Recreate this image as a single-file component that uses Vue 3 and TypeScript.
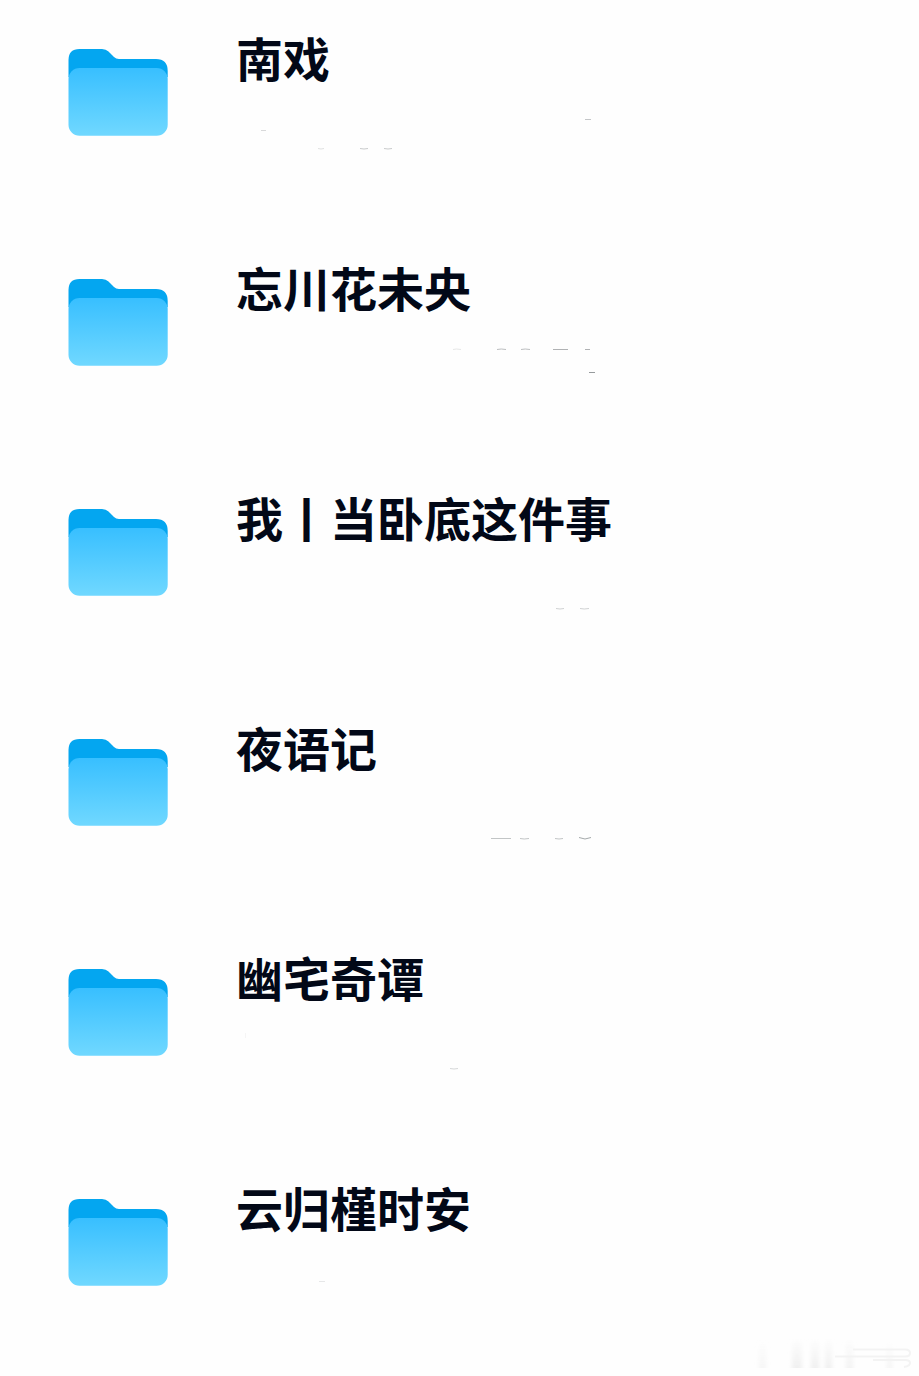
<script setup lang="ts">
interface Mark {
  d: string
  tone: string
}

interface Folder {
  name: string
  marks: Mark[]
}

const folders: Folder[] = [
  {
    name: '南戏',
    marks: [
      { d: 'M349 9.5h6', tone: '#c4c6c8' },
      { d: 'M25 20.5h5', tone: '#d8d9da' },
      { d: 'M82 38.5q3 1 6 0', tone: '#e0e1e1' },
      { d: 'M124 38.5q4 1 8 0M148 38.5q4 1 8 0', tone: '#c9cbcc' },
    ],
  },
  {
    name: '忘川花未央',
    marks: [
      { d: 'M217 9.5q3-1 8 0', tone: '#e6e7e7' },
      { d: 'M261 9.5q4-1 9 0M285 9.5q4-1 9 0', tone: '#bcbec0' },
      { d: 'M317 9.5h15M349 9.5h5', tone: '#b0b2b4' },
      { d: 'M353 32.5h6', tone: '#969a9c' },
    ],
  },
  {
    name: '我丨当卧底这件事',
    marks: [{ d: 'M320 38.5q4 1 8 0M344 38.5q4 1 9 0', tone: '#d0d2d3' }],
  },
  {
    name: '夜语记',
    marks: [
      { d: 'M255 38.5h20M284 38.5q4 1 9 0M319 38.5q4 1 8 0', tone: '#c2c5c6' },
      { d: 'M343 37.5q6 3 12 0', tone: '#a4a9aa' },
    ],
  },
  {
    name: '幽宅奇谭',
    marks: [
      { d: 'M9.5 3v5', tone: '#f5f5f5' },
      { d: 'M214 38.5q4 1 8 0', tone: '#d6d8d9' },
    ],
  },
  {
    name: '云归槿时安',
    marks: [{ d: 'M83 21.5h6', tone: '#e6e7e8' }],
  },
]
</script>

<template>
  <main class="page">
    <svg class="defs" aria-hidden="true">
      <defs>
        <linearGradient id="folder-front" x1="0" y1="0" x2="0" y2="1">
          <stop offset="0" stop-color="#38bfff" />
          <stop offset="1" stop-color="#70d8ff" />
        </linearGradient>
      </defs>
    </svg>
    <ul class="list">
      <li v-for="folder in folders" :key="folder.name" class="row">
        <svg class="icon" viewBox="0 0 100 88" aria-hidden="true">
          <path
            d="M0.5 29V12Q0.500 1 11.500 1H34Q38 1 40.500 3.500L46 9Q48 11 51 11H88Q99.700 11 99.700 23V29Z"
            fill="#04a6f0"
          />
          <rect x="0.5" y="20" width="99.2" height="67.7" rx="11" fill="url(#folder-front)" />
        </svg>
        <div class="info">
          <h2 class="name">{{ folder.name }}</h2>
          <svg class="marks" viewBox="0 0 400 48" aria-hidden="true">
            <path v-for="mark in folder.marks" :key="mark.d" :d="mark.d" :stroke="mark.tone" fill="none" />
          </svg>
        </div>
      </li>
    </ul>
    <footer class="footer">
      <svg class="stamp" viewBox="0 0 174 32" aria-hidden="true">
        <defs>
          <linearGradient id="stamp-fade" x1="0" y1="0" x2="0" y2="1">
            <stop offset="0" stop-color="#f0f0f0" stop-opacity="0" />
            <stop offset="1" stop-color="#f0f0f0" />
          </linearGradient>
          <filter id="stamp-soft" x="-10%" y="-10%" width="120%" height="120%">
            <feGaussianBlur stdDeviation="2 0" />
          </filter>
        </defs>
        <g fill="url(#stamp-fade)" filter="url(#stamp-soft)">
          <rect x="20" y="2" width="7" height="28" opacity=".6" />
          <rect x="53" y="0" width="10" height="30" />
          <rect x="72" y="0" width="8" height="30" />
          <rect x="86" y="0" width="7" height="30" />
          <rect x="107" y="0" width="7" height="30" opacity=".8" />
          <rect x="148" y="2" width="5" height="28" opacity=".7" />
        </g>
        <g fill="none" stroke="#f3f3f3" stroke-width="2">
          <path d="M114 11.5H166Q171 11.5 171 15T166 18.500H96" />
          <path d="M134 22H166Q171 22 171 25T165 29" />
        </g>
      </svg>
    </footer>
  </main>
</template>

<style>
body {
  margin: 0;
  background: #fefefe;
}
</style>

<style scoped>
.page {
  box-sizing: border-box;
  padding: 26px 6px 0 68px;
  background: #fefefe;
  font-family: "Noto Sans CJK SC", sans-serif;
}

.defs {
  position: absolute;
  width: 0;
  height: 0;
}

.list {
  display: flex;
  flex-direction: column;
  gap: 90px;
  margin: 0;
  padding: 0;
  list-style: none;
}

.row {
  display: flex;
  align-items: flex-start;
  gap: 68px;
  min-height: 140px;
}

.icon {
  flex: none;
  width: 100px;
  height: 88px;
  margin-top: 22px;
}

.info {
  flex: 1;
  min-width: 0;
}

.name {
  margin: 0;
  color: #020817;
  font-size: 47px;
  font-weight: 700;
  line-height: 62px;
}

.marks {
  display: block;
  width: 100%;
  max-width: 400px;
  margin-top: 22px;
}

.footer {
  display: flex;
  justify-content: flex-end;
  margin-top: 22px;
}

.stamp {
  width: 174px;
  height: 32px;
}
</style>
